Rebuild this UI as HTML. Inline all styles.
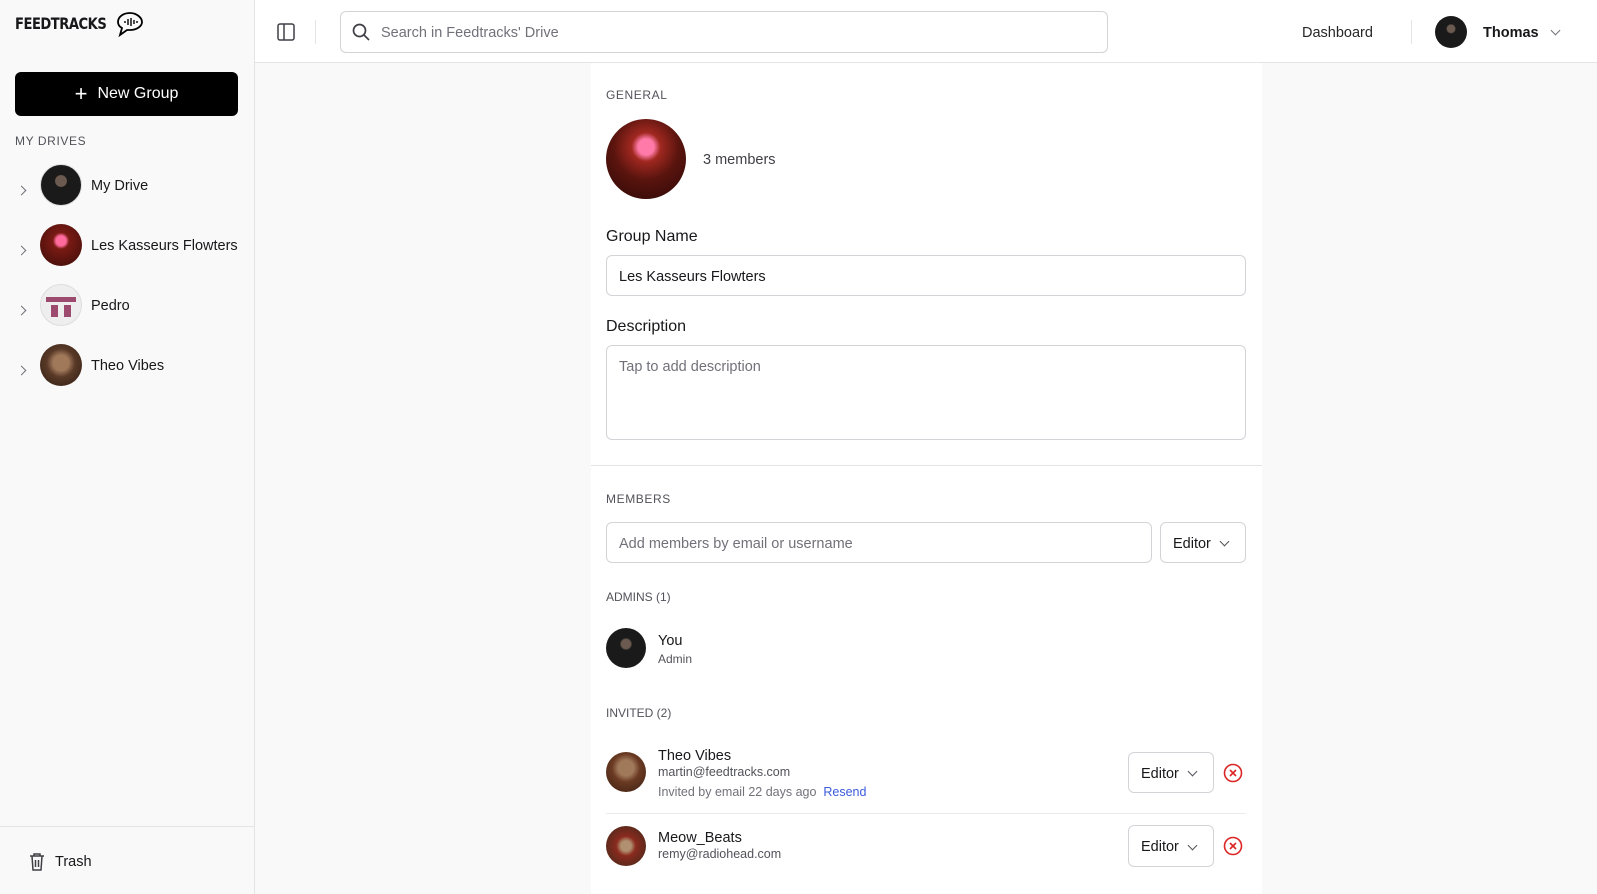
<!DOCTYPE html>
<html><head><meta charset="utf-8"><style>
*{box-sizing:border-box;margin:0;padding:0}
body{width:1597px;height:894px;overflow:hidden;background:#f9f9f9;font-family:"Liberation Sans",sans-serif;color:#18181b;position:relative}
.a{position:absolute}
.side{left:0;top:0;width:255px;height:894px;background:#f9f9f9;border-right:1px solid #e4e4e7}
.hdr{left:255px;top:0;right:0;height:63px;background:#fff;border-bottom:1px solid #e4e4e7}
.panel{left:591px;top:63px;width:671px;height:831px;background:#fff}
.lbl{font-size:12px;letter-spacing:.6px;color:#52525b}
.inp{border:1px solid #d4d4d8;border-radius:6px;background:#fff;font-size:14.5px;color:#71717a;padding-left:12px}
.av{border-radius:50%;overflow:hidden}
.btn{border:1px solid #d4d4d8;border-radius:6px;background:#fff;font-size:14.5px;display:flex;align-items:center;padding-left:12px;gap:10px}
.t14{font-size:14.5px}
.s12{font-size:12px;color:#52525b}
</style></head><body>
<div class="a side">
  <div class="a" style="left:15px;top:14px;font-weight:900;font-size:16px;letter-spacing:-.6px;font-family:'DejaVu Sans',sans-serif;transform:scaleX(.82);transform-origin:left">FEEDTRACKS</div>
  <svg class="a" style="left:115px;top:11px" width="30" height="26" viewBox="0 0 30 26"><path d="M15 2C8 2 3 6 3 11c0 3 2 5 4 6l-2 7 7-5c1 0 2 0 3 0 7 0 12-4 12-8S22 2 15 2z" fill="none" stroke="#000" stroke-width="1.8"/><path d="M10 10v2M13 8v6M16 7v8M19 9v4M22 10v2" stroke="#000" stroke-width="1.4"/></svg>
  <div class="a" style="left:15px;top:72px;width:223px;height:44px;background:#000;border-radius:6px;color:#fff;font-size:16px;display:flex;align-items:center;justify-content:center;gap:10px"><span style="font-size:22px;font-weight:300;line-height:1">+</span>New Group</div>
  <div class="a lbl" style="left:15px;top:134px">MY DRIVES</div>
  <div class="a" style="left:0;top:164px;width:255px">
    <div style="position:relative;height:60px"><span class="a" style="left:18px;top:23px;width:7px;height:7px;border-right:1.5px solid #71717a;border-bottom:1.5px solid #71717a;transform:rotate(-45deg)"></span><div class="a av" style="left:40px;top:0;width:42px;height:42px;background:radial-gradient(circle at 50% 40%,#6b5a50 0 18%,#1a1a1a 20%);border:1px solid #ddd"></div><div class="a t14" style="left:91px;top:14px">My Drive</div></div>
    <div style="position:relative;height:60px"><span class="a" style="left:18px;top:23px;width:7px;height:7px;border-right:1.5px solid #71717a;border-bottom:1.5px solid #71717a;transform:rotate(-45deg)"></span><div class="a av" style="left:40px;top:0;width:42px;height:42px;background:radial-gradient(circle at 50% 40%,#ff6b9d 0 15%,#7a1a14 25%,#3a0c08)"></div><div class="a t14" style="left:91px;top:14px">Les Kasseurs Flowters</div></div>
    <div style="position:relative;height:60px"><span class="a" style="left:18px;top:23px;width:7px;height:7px;border-right:1.5px solid #71717a;border-bottom:1.5px solid #71717a;transform:rotate(-45deg)"></span><div class="a av" style="left:40px;top:0;width:42px;height:42px;background:#eee;border:1px solid #ddd"><div class="a" style="left:5px;top:12px;width:30px;height:5px;background:#9c4a6e"></div><div class="a" style="left:10px;top:20px;width:7px;height:12px;background:#9c4a6e"></div><div class="a" style="left:23px;top:20px;width:7px;height:12px;background:#9c4a6e"></div></div><div class="a t14" style="left:91px;top:14px">Pedro</div></div>
    <div style="position:relative;height:60px"><span class="a" style="left:18px;top:23px;width:7px;height:7px;border-right:1.5px solid #71717a;border-bottom:1.5px solid #71717a;transform:rotate(-45deg)"></span><div class="a av" style="left:40px;top:0;width:42px;height:42px;background:radial-gradient(circle at 50% 45%,#a0785a 0 25%,#5a3a28 45%,#2a1a10)"></div><div class="a t14" style="left:91px;top:14px">Theo Vibes</div></div>
  </div>
  <div class="a" style="left:0;top:826px;width:255px;border-top:1px solid #e4e4e7"></div>
  <svg class="a" style="left:28px;top:852px" width="18" height="19" viewBox="0 0 18 19" fill="none" stroke="#3f3f46" stroke-width="1.5"><path d="M2 4h14M6 4V2h6v2M4 4l1 14h8l1-14M7.5 8v7M10.5 8v7"/></svg>
  <div class="a t14" style="left:55px;top:854px">Trash</div>
</div>
<div class="a hdr">
  <svg class="a" style="left:22px;top:23px" width="18" height="18" viewBox="0 0 18 18" fill="none" stroke="#3f3f46" stroke-width="1.5"><rect x="1" y="1" width="16" height="16" rx="2"/><path d="M7 1v16"/></svg>
  <div class="a" style="left:60px;top:20px;width:1px;height:24px;background:#e4e4e7"></div>
  <div class="a inp" style="left:85px;top:11px;width:768px;height:42px;display:flex;align-items:center;padding-left:40px;padding-top:2px">Search in Feedtracks' Drive</div>
  <svg class="a" style="left:97px;top:23px" width="18" height="18" viewBox="0 0 18 18" fill="none" stroke="#3f3f46" stroke-width="1.7"><circle cx="7.5" cy="7.5" r="6"/><path d="M12 12l5 5"/></svg>
  <div class="a t14" style="left:1047px;top:25px;color:#27272a">Dashboard</div>
  <div class="a" style="left:1156px;top:20px;width:1px;height:24px;background:#e4e4e7"></div>
  <div class="a av" style="left:1180px;top:16px;width:32px;height:32px;background:radial-gradient(circle at 50% 40%,#6b5a50 0 15%,#1a1a1a 20%)"></div>
  <div class="a t14" style="left:1228px;top:25px;font-weight:bold">Thomas</div>
  <span class="a" style="left:1297px;top:27px;width:7px;height:7px;border-right:1.5px solid #71717a;border-bottom:1.5px solid #71717a;transform:rotate(45deg)"></span>
</div>
<div class="a panel">
  <div class="a lbl" style="left:15px;top:25px">GENERAL</div>
  <div class="a av" style="left:15px;top:56px;width:80px;height:80px;background:radial-gradient(circle at 50% 35%,#ff7aa8 0 12%,#a02820 22%,#5a140e 50%,#2a0806)"></div>
  <div class="a t14" style="left:112px;top:89px;color:#3f3f46">3 members</div>
  <div class="a" style="left:15px;top:165px;font-size:16px">Group Name</div>
  <div class="a inp" style="left:15px;top:192px;width:640px;height:41px;display:flex;align-items:center;color:#18181b;padding-top:2px">Les Kasseurs Flowters</div>
  <div class="a" style="left:15px;top:255px;font-size:16px">Description</div>
  <div class="a inp" style="left:15px;top:282px;width:640px;height:95px;padding-top:13px">Tap to add description</div>
  <div class="a" style="left:0;top:402px;width:671px;border-top:1px solid #e4e4e7"></div>
  <div class="a lbl" style="left:15px;top:429px">MEMBERS</div>
  <div class="a inp" style="left:15px;top:459px;width:546px;height:41px;display:flex;align-items:center;padding-top:2px">Add members by email or username</div>
  <div class="a btn" style="left:569px;top:459px;width:86px;height:41px;padding-top:2px">Editor<span style="width:7px;height:7px;border-right:1.5px solid #52525b;border-bottom:1.5px solid #52525b;transform:rotate(45deg);margin-top:-4px"></span></div>
  <div class="a s12" style="left:15px;top:527px">ADMINS (1)</div>
  <div class="a av" style="left:15px;top:565px;width:40px;height:40px;background:radial-gradient(circle at 50% 40%,#6b5a50 0 15%,#1a1a1a 20%)"></div>
  <div class="a t14" style="left:67px;top:570px">You</div>
  <div class="a s12" style="left:67px;top:589px">Admin</div>
  <div class="a s12" style="left:15px;top:643px">INVITED (2)</div>
  <div class="a av" style="left:15px;top:689px;width:40px;height:40px;background:radial-gradient(circle at 50% 40%,#a0785a 0 25%,#6a3a22 45%,#3a2014)"></div>
  <div class="a t14" style="left:67px;top:685px">Theo Vibes</div>
  <div class="a s12" style="left:67px;top:702px;font-size:12.5px">martin@feedtracks.com</div>
  <div class="a s12" style="left:67px;top:722px;font-size:12.5px;color:#71717a">Invited by email 22 days ago &nbsp;<span style="color:#3b5bdb">Resend</span></div>
  <div class="a btn" style="left:537px;top:689px;width:86px;height:41px;padding-top:2px">Editor<span style="width:7px;height:7px;border-right:1.5px solid #52525b;border-bottom:1.5px solid #52525b;transform:rotate(45deg);margin-top:-4px"></span></div>
  <svg class="a" style="left:632px;top:700px" width="20" height="20" viewBox="0 0 20 20" fill="none" stroke="#dc2626" stroke-width="1.6"><circle cx="10" cy="10" r="8.5"/><path d="M7 7l6 6M13 7l-6 6"/></svg>
  <div class="a" style="left:15px;top:750px;width:640px;border-top:1px solid #ececef"></div>
  <div class="a av" style="left:15px;top:763px;width:40px;height:40px;background:radial-gradient(circle at 50% 50%,#b09070 0 18%,#8a2a1e 35%,#3a2a1a)"></div>
  <div class="a t14" style="left:67px;top:767px">Meow_Beats</div>
  <div class="a s12" style="left:67px;top:784px;font-size:12.5px">remy@radiohead.com</div>
  <div class="a btn" style="left:537px;top:762px;width:86px;height:42px;padding-top:2px">Editor<span style="width:7px;height:7px;border-right:1.5px solid #52525b;border-bottom:1.5px solid #52525b;transform:rotate(45deg);margin-top:-4px"></span></div>
  <svg class="a" style="left:632px;top:773px" width="20" height="20" viewBox="0 0 20 20" fill="none" stroke="#dc2626" stroke-width="1.6"><circle cx="10" cy="10" r="8.5"/><path d="M7 7l6 6M13 7l-6 6"/></svg>
</div>
</body></html>
